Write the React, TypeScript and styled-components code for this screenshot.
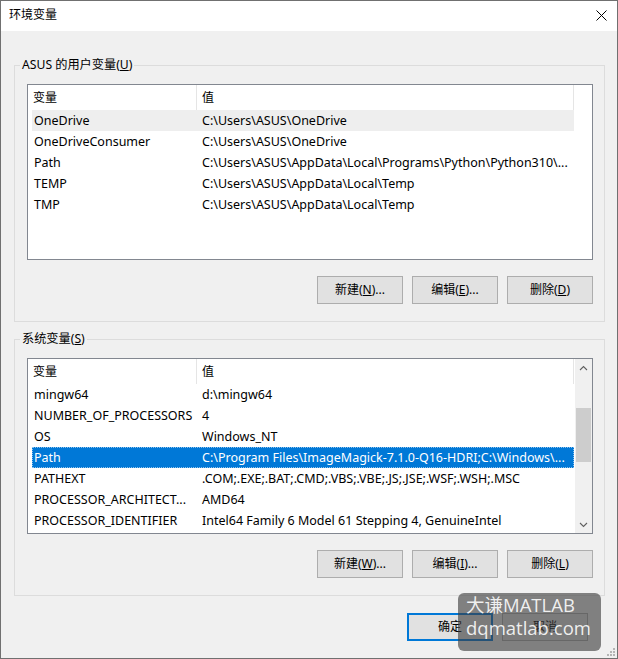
import React from 'react';
import styled, { createGlobalStyle } from 'styled-components';

const UI_FONT = `"Noto Sans", "Noto Sans CJK SC", sans-serif`;

const GlobalStyle = createGlobalStyle`
  html, body {
    margin: 0;
    padding: 0;
    background: #f0f0f0;
  }
  body {
    font-family: ${UI_FONT};
    font-size: 12px;
    color: #000;
  }
`;

const Window = styled.div`
  position: relative;
  box-sizing: border-box;
  width: 618px;
  height: 659px;
  border: 1px solid #707070;
  background: #f0f0f0;
  display: flex;
  flex-direction: column;
  overflow: hidden;
`;

const TitleBar = styled.div`
  height: 30px;
  flex: none;
  background: #fff;
  display: flex;
  align-items: center;
  justify-content: space-between;
  padding: 0 10px 2px 8px;
  box-sizing: border-box;
`;

const Title = styled.span`
  font-size: 12px;
  line-height: 16px;
`;

const CloseButton = styled.span`
  display: flex;
  width: 11px;
  height: 11px;
`;

const Body = styled.div`
  flex: 1;
  padding: 34px 12px 0 13px;
  display: flex;
  flex-direction: column;
`;

const Group = styled.section`
  border: 1px solid #dcdcdc;
  padding: 0 11px 17px 12px;
  & + & {
    margin-top: 17px;
  }
`;

const Caption = styled.div`
  width: fit-content;
  margin: -9px 0 11px -7px;
  padding: 0 2px;
  line-height: 16px;
  font-size: 12.2px;
  background: #f0f0f0;
  white-space: nowrap;
`;

const ListBox = styled.div`
  height: 176px;
  box-sizing: border-box;
  border: 1px solid #828790;
  background: #fff;
  display: flex;
  overflow: hidden;
`;

const ListArea = styled.div`
  flex: 1;
  min-width: 0;
  display: flex;
  flex-direction: column;
`;

const Header = styled.div`
  display: flex;
  height: 25px;
  flex: none;
`;

const HeaderCell = styled.div<{ $w: number }>`
  width: ${(p) => p.$w}px;
  flex: none;
  box-sizing: border-box;
  border-right: 1px solid #e5e5e5;
  padding-left: 5px;
  line-height: 25px;
  white-space: nowrap;
`;

const Row = styled.div<{ $state?: 'plain' | 'soft' | 'selected' }>`
  display: flex;
  height: 21px;
  width: 542px;
  margin-left: 4px;
  box-sizing: border-box;
  font-size: 12.5px;
  line-height: 21px;
  background: ${(p) =>
    p.$state === 'selected' ? '#0078d7' : p.$state === 'soft' ? '#eeeeee' : 'transparent'};
  color: ${(p) => (p.$state === 'selected' ? '#fff' : '#000')};
  outline: ${(p) => (p.$state === 'selected' ? '1px dotted rgba(255,255,255,0.55)' : 'none')};
  outline-offset: -1px;
`;

const NameCell = styled.div`
  width: 165px;
  flex: none;
  box-sizing: border-box;
  padding-left: 2px;
  white-space: nowrap;
  overflow: hidden;
`;

const ValueCell = styled.div`
  flex: 1;
  min-width: 0;
  box-sizing: border-box;
  padding-left: 5px;
  white-space: nowrap;
  overflow: hidden;
`;

const ScrollBar = styled.div`
  width: 17px;
  flex: none;
  background: #f0f0f0;
  display: flex;
  flex-direction: column;
`;

const ScrollArrow = styled.div`
  height: 17px;
  flex: none;
  display: flex;
  align-items: center;
  justify-content: center;
`;

const Track = styled.div`
  flex: 1;
  padding: 0 1px;
`;

const Thumb = styled.div`
  height: 54px;
  margin-top: 32px;
  background: #cdcdcd;
`;

const ButtonRow = styled.div`
  display: flex;
  justify-content: flex-end;
  gap: 9px;
  margin-top: 16px;
`;

const Footer = styled.div`
  display: flex;
  justify-content: flex-end;
  gap: 9px;
  padding: 17px 17px 0 0;
`;

const Button = styled.button<{ $default?: boolean }>`
  width: 86px;
  height: 28px;
  box-sizing: border-box;
  padding: 0;
  border: 1px solid ${(p) => (p.$default ? '#0078d7' : '#adadad')};
  box-shadow: ${(p) => (p.$default ? 'inset 0 0 0 1px #0078d7' : 'none')};
  background: #e1e1e1;
  color: #000;
  font-family: ${UI_FONT};
  font-size: 12px;
  line-height: 16px;
  white-space: nowrap;
`;

const Watermark = styled.div`
  position: absolute;
  left: 457px;
  top: 592px;
  width: 143px;
  height: 58px;
  box-sizing: border-box;
  border-radius: 6px;
  background: rgba(60, 60, 60, 0.62);
  color: rgba(255, 255, 255, 0.88);
  font-family: "Open Sans", "Noto Sans CJK SC", sans-serif;
  font-size: 18.5px;
  line-height: 23px;
  padding: 0 0 0 8px;
  white-space: nowrap;
  pointer-events: none;
`;

const Grip = styled.svg`
  position: absolute;
  right: 2px;
  bottom: 2px;
`;

type Var = { name: string; value: string };

const userVars: Var[] = [
  { name: 'OneDrive', value: 'C:\\Users\\ASUS\\OneDrive' },
  { name: 'OneDriveConsumer', value: 'C:\\Users\\ASUS\\OneDrive' },
  { name: 'Path', value: 'C:\\Users\\ASUS\\AppData\\Local\\Programs\\Python\\Python310\\...' },
  { name: 'TEMP', value: 'C:\\Users\\ASUS\\AppData\\Local\\Temp' },
  { name: 'TMP', value: 'C:\\Users\\ASUS\\AppData\\Local\\Temp' },
];

const systemVars: Var[] = [
  { name: 'mingw64', value: 'd:\\mingw64' },
  { name: 'NUMBER_OF_PROCESSORS', value: '4' },
  { name: 'OS', value: 'Windows_NT' },
  { name: 'Path', value: 'C:\\Program Files\\ImageMagick-7.1.0-Q16-HDRI;C:\\Windows\\...' },
  { name: 'PATHEXT', value: '.COM;.EXE;.BAT;.CMD;.VBS;.VBE;.JS;.JSE;.WSF;.WSH;.MSC' },
  { name: 'PROCESSOR_ARCHITECT...', value: 'AMD64' },
  { name: 'PROCESSOR_IDENTIFIER', value: 'Intel64 Family 6 Model 61 Stepping 4, GenuineIntel' },
];

const Chevron = ({ up }: { up?: boolean }) => (
  <svg width="9" height="6" viewBox="0 0 9 6">
    <path
      d={up ? 'M1 5 L4.5 1.5 L8 5' : 'M1 1 L4.5 4.5 L8 1'}
      fill="none"
      stroke="#606060"
      strokeWidth="1.1"
    />
  </svg>
);

const VarList = ({
  vars,
  soft,
  selected,
  scroll,
}: {
  vars: Var[];
  soft?: number;
  selected?: number;
  scroll?: boolean;
}) => (
  <ListBox>
    <ListArea>
      <Header>
        <HeaderCell $w={169}>变量</HeaderCell>
        <HeaderCell $w={377}>值</HeaderCell>
      </Header>
      {vars.map((v, i) => (
        <Row key={v.name + i} $state={i === selected ? 'selected' : i === soft ? 'soft' : 'plain'}>
          <NameCell>{v.name}</NameCell>
          <ValueCell>{v.value}</ValueCell>
        </Row>
      ))}
    </ListArea>
    {scroll && (
      <ScrollBar>
        <ScrollArrow>
          <Chevron up />
        </ScrollArrow>
        <Track>
          <Thumb />
        </Track>
        <ScrollArrow>
          <Chevron />
        </ScrollArrow>
      </ScrollBar>
    )}
  </ListBox>
);

export default function App() {
  return (
    <>
      <GlobalStyle />
      <Window>
        <TitleBar>
          <Title>环境变量</Title>
          <CloseButton>
            <svg width="11" height="11" viewBox="0 0 11 11">
              <path d="M0.5 0.5 L10.5 10.5 M10.5 0.5 L0.5 10.5" stroke="#000" strokeWidth="1" />
            </svg>
          </CloseButton>
        </TitleBar>
        <Body>
          <Group>
            <Caption>
              ASUS 的用户变量(<u>U</u>)
            </Caption>
            <VarList vars={userVars} soft={0} />
            <ButtonRow>
              <Button>
                新建(<u>N</u>)...
              </Button>
              <Button>
                编辑(<u>E</u>)...
              </Button>
              <Button>
                删除(<u>D</u>)
              </Button>
            </ButtonRow>
          </Group>
          <Group>
            <Caption>
              系统变量(<u>S</u>)
            </Caption>
            <VarList vars={systemVars} selected={3} scroll />
            <ButtonRow>
              <Button>
                新建(<u>W</u>)...
              </Button>
              <Button>
                编辑(<u>I</u>)...
              </Button>
              <Button>
                删除(<u>L</u>)
              </Button>
            </ButtonRow>
          </Group>
          <Footer>
            <Button $default>确定</Button>
            <Button>取消</Button>
          </Footer>
        </Body>
        <Watermark>
          <div>大谦MATLAB</div>
          <div>dqmatlab.com</div>
        </Watermark>
        <Grip width="9" height="9" viewBox="0 0 9 9">
          <rect x="7" y="1" width="2" height="2" fill="#b5b5b5" />
          <rect x="4" y="4" width="2" height="2" fill="#b5b5b5" />
          <rect x="7" y="4" width="2" height="2" fill="#b5b5b5" />
          <rect x="1" y="7" width="2" height="2" fill="#b5b5b5" />
          <rect x="4" y="7" width="2" height="2" fill="#b5b5b5" />
          <rect x="7" y="7" width="2" height="2" fill="#b5b5b5" />
        </Grip>
      </Window>
    </>
  );
}
